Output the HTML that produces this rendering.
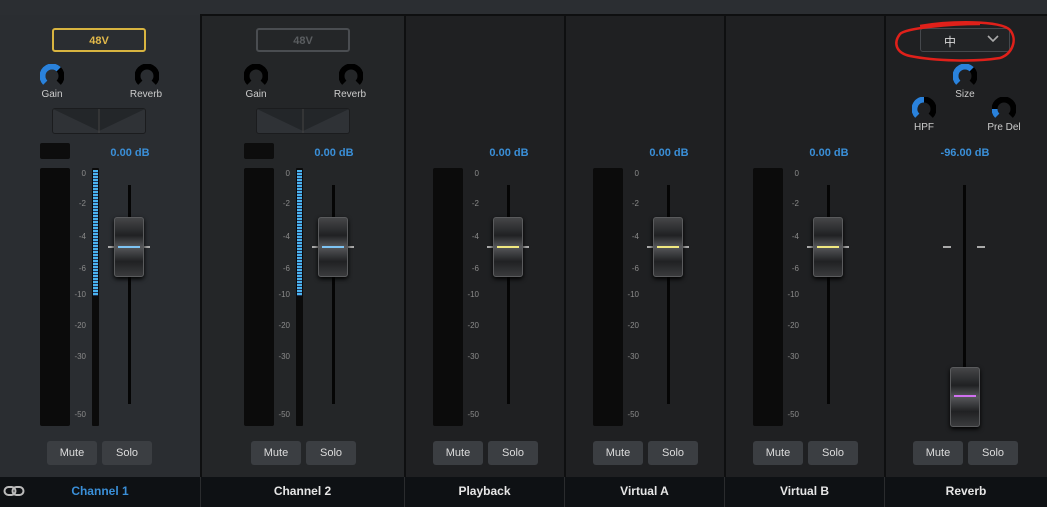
<!DOCTYPE html>
<html><head><meta charset="utf-8"><style>
*{margin:0;padding:0;box-sizing:border-box}
body{width:1047px;height:507px;background:#2b2e32;position:relative;overflow:hidden;font-family:"Liberation Sans","Noto Sans CJK SC",sans-serif;font-size:10px;color:#c8c8c8}
.a{position:absolute}
.ch{position:absolute;top:15px;height:462px;border-left:2px solid #0e0f10}
.foot{position:absolute;top:477px;height:30px;background:#0e1114;color:#e6e6e6;font-weight:bold;font-size:12px;text-align:center;line-height:29px;border-left:1px solid #2a2c2e}
.btn48{position:absolute;top:28px;width:94px;height:24px;border-radius:3px;text-align:center;line-height:22px;font-weight:bold;font-size:11px}
.meter{position:absolute;top:168px;width:30px;height:258px;background:#0b0b0b;border-radius:2px}
.sc{position:absolute;font-size:8px;color:#8a8a8a;text-align:right;width:14px}
.trk{position:absolute;top:185px;width:3px;height:219px;background:#050505}
.cap{position:absolute;width:30px;height:60px;border-radius:3px;border:1px solid #5a5b5d;background:linear-gradient(#454648,#202123 30%,#56575a 50%,#202123 75%,#3a3b3d 100%);box-shadow:0 2px 5px #000}
.cap i{position:absolute;left:3px;right:3px;height:2px}
.tk{position:absolute;height:2px;width:8px;background:#aaa}
.mb{position:absolute;top:441px;width:50px;height:24px;background:#3b3e42;border-radius:3px;text-align:center;line-height:24px;font-size:11px;color:#ddd}
.db{position:absolute;top:147px;width:90px;text-align:center;font-weight:bold;font-size:11px;color:#3a8fd8}
.kl{position:absolute;width:60px;text-align:center;font-size:10px;color:#ccc}
.sm{position:absolute;top:143px;width:30px;height:16px;background:#0d0d0d;border-radius:2px}
.pan{position:absolute;top:108px;width:94px;height:26px;border:1px solid #1b1c1e;border-radius:3px;background:#2f3236}
</style></head><body>
<div class="a" style="left:0;top:15px;width:200px;height:462px;background:#2a2d31"></div>
<div class="ch" style="left:200px;width:204px;background:#242628"></div>
<div class="ch" style="left:404px;width:160px;background:#1f2022"></div>
<div class="ch" style="left:564px;width:160px;background:#1f2022"></div>
<div class="ch" style="left:724px;width:160px;background:#1f2022"></div>
<div class="ch" style="left:884px;width:163px;background:#1f2022"></div>
<div class="a" style="left:200px;top:14px;width:847px;height:2px;background:#0e0f10"></div>

<div class="btn48" style="left:52px;border:2px solid #d8b440;color:#e2b94a">48V</div>
<div class="btn48" style="left:256px;border:2px solid #4a4d51;color:#5a5d60">48V</div>

<svg class="a" style="left:40px;top:64px" width="24" height="24"><path d="M5.28 18.72A9.5 9.5 0 1 1 18.72 18.72" fill="none" stroke="#000" stroke-width="6"/><path d="M5.28 18.72A9.5 9.5 0 0 1 18.72 5.28" fill="none" stroke="#2a82dc" stroke-width="6"/></svg>
<div class="kl" style="left:22px;top:89px">Gain</div>
<svg class="a" style="left:135px;top:64px" width="24" height="24"><path d="M5.28 18.72A9.5 9.5 0 1 1 18.72 18.72" fill="none" stroke="#000" stroke-width="6"/></svg>
<div class="kl" style="left:116px;top:89px">Reverb</div>
<svg class="a" style="left:244px;top:64px" width="24" height="24"><path d="M5.28 18.72A9.5 9.5 0 1 1 18.72 18.72" fill="none" stroke="#000" stroke-width="6"/></svg>
<div class="kl" style="left:226px;top:89px">Gain</div>
<svg class="a" style="left:339px;top:64px" width="24" height="24"><path d="M5.28 18.72A9.5 9.5 0 1 1 18.72 18.72" fill="none" stroke="#000" stroke-width="6"/></svg>
<div class="kl" style="left:320px;top:89px">Reverb</div>

<div class="a" style="left:920px;top:28px;width:90px;height:24px;border:1px solid #45484c;border-radius:3px;background:#222426"></div>
<div class="a" style="left:944px;top:33px;font-size:12px;color:#d8d8d8">中</div>
<svg class="a" style="left:987px;top:35px" width="12" height="8"><path d="M1 1L6 6L11 1" fill="none" stroke="#aaa" stroke-width="1.6"/></svg>
<svg class="a" style="left:890px;top:18px" width="130" height="48"><path d="M30 8C60 3 110 2 120 12C128 22 122 36 110 40C85 44 45 43 20 38C6 35 3 25 10 16C16 10 60 6 90 6" fill="none" stroke="#e0201a" stroke-width="2.5"/></svg>
<svg class="a" style="left:953px;top:64px" width="24" height="24"><path d="M5.28 18.72A9.5 9.5 0 1 1 18.72 18.72" fill="none" stroke="#000" stroke-width="6"/><path d="M5.28 18.72A9.5 9.5 0 0 1 18.72 5.28" fill="none" stroke="#2a82dc" stroke-width="6"/></svg>
<div class="kl" style="left:935px;top:89px">Size</div>
<svg class="a" style="left:912px;top:97px" width="24" height="24"><path d="M5.28 18.72A9.5 9.5 0 1 1 18.72 18.72" fill="none" stroke="#000" stroke-width="6"/><path d="M5.28 18.72A9.5 9.5 0 0 1 12 2.5" fill="none" stroke="#2a82dc" stroke-width="6"/></svg>
<div class="kl" style="left:894px;top:122px">HPF</div>
<svg class="a" style="left:992px;top:97px" width="24" height="24"><path d="M5.28 18.72A9.5 9.5 0 1 1 18.72 18.72" fill="none" stroke="#000" stroke-width="6"/><path d="M5.28 18.72A9.5 9.5 0 0 1 2.5 12" fill="none" stroke="#2a82dc" stroke-width="6"/></svg>
<div class="kl" style="left:974px;top:122px">Pre Del</div>

<div class="pan" style="left:52px"><svg width="92" height="24"><path d="M0 0L46 22L46 0ZM92 0L46 22L46 0Z" fill="#232629"/><line x1="46" y1="0" x2="46" y2="24" stroke="#444" /></svg></div>
<div class="pan" style="left:256px"><svg width="92" height="24"><path d="M0 0L46 22L46 0ZM92 0L46 22L46 0Z" fill="#232629"/><line x1="46" y1="0" x2="46" y2="24" stroke="#444" /></svg></div>
<div class="sm" style="left:40px"></div>
<div class="sm" style="left:244px"></div>

<div class="db" style="left:85px">0.00 dB</div>
<div class="db" style="left:289px">0.00 dB</div>
<div class="db" style="left:464px">0.00 dB</div>
<div class="db" style="left:624px">0.00 dB</div>
<div class="db" style="left:784px">0.00 dB</div>
<div class="db" style="left:920px">-96.00 dB</div>

<div class="meter" style="left:40px"></div>
<div class="meter" style="left:244px"></div>
<div class="meter" style="left:433px"></div>
<div class="meter" style="left:593px"></div>
<div class="meter" style="left:753px"></div>
<div class="a" style="left:92px;top:168px;width:7px;height:258px;background:#0b0b0b;border-radius:1px"></div>
<div class="a" style="left:93px;top:170px;width:5px;height:126px;background:repeating-linear-gradient(#4ab4f0 0 2px,#235 2px 3px)"></div>
<div class="a" style="left:296px;top:168px;width:7px;height:258px;background:#0b0b0b;border-radius:1px"></div>
<div class="a" style="left:297px;top:170px;width:5px;height:126px;background:repeating-linear-gradient(#4ab4f0 0 2px,#235 2px 3px)"></div>

<div class="a" style="left:72px;top:0">
<div class="sc" style="top:169px">0</div><div class="sc" style="top:199px">-2</div><div class="sc" style="top:232px">-4</div><div class="sc" style="top:264px">-6</div><div class="sc" style="top:290px">-10</div><div class="sc" style="top:321px">-20</div><div class="sc" style="top:352px">-30</div><div class="sc" style="top:410px">-50</div></div>
<div class="a" style="left:276px;top:0">
<div class="sc" style="top:169px">0</div><div class="sc" style="top:199px">-2</div><div class="sc" style="top:232px">-4</div><div class="sc" style="top:264px">-6</div><div class="sc" style="top:290px">-10</div><div class="sc" style="top:321px">-20</div><div class="sc" style="top:352px">-30</div><div class="sc" style="top:410px">-50</div></div>
<div class="a" style="left:465px;top:0">
<div class="sc" style="top:169px">0</div><div class="sc" style="top:199px">-2</div><div class="sc" style="top:232px">-4</div><div class="sc" style="top:264px">-6</div><div class="sc" style="top:290px">-10</div><div class="sc" style="top:321px">-20</div><div class="sc" style="top:352px">-30</div><div class="sc" style="top:410px">-50</div></div>
<div class="a" style="left:625px;top:0">
<div class="sc" style="top:169px">0</div><div class="sc" style="top:199px">-2</div><div class="sc" style="top:232px">-4</div><div class="sc" style="top:264px">-6</div><div class="sc" style="top:290px">-10</div><div class="sc" style="top:321px">-20</div><div class="sc" style="top:352px">-30</div><div class="sc" style="top:410px">-50</div></div>
<div class="a" style="left:785px;top:0">
<div class="sc" style="top:169px">0</div><div class="sc" style="top:199px">-2</div><div class="sc" style="top:232px">-4</div><div class="sc" style="top:264px">-6</div><div class="sc" style="top:290px">-10</div><div class="sc" style="top:321px">-20</div><div class="sc" style="top:352px">-30</div><div class="sc" style="top:410px">-50</div></div>

<div class="trk" style="left:128px"></div><div class="tk" style="left:108px;top:246px"></div><div class="tk" style="left:142px;top:246px"></div>
<div class="cap" style="left:114px;top:217px"><i style="top:28px;background:#7ec4f4"></i></div>
<div class="trk" style="left:332px"></div><div class="tk" style="left:312px;top:246px"></div><div class="tk" style="left:346px;top:246px"></div>
<div class="cap" style="left:318px;top:217px"><i style="top:28px;background:#7ec4f4"></i></div>
<div class="trk" style="left:507px"></div><div class="tk" style="left:487px;top:246px"></div><div class="tk" style="left:521px;top:246px"></div>
<div class="cap" style="left:493px;top:217px"><i style="top:28px;background:#f0e880"></i></div>
<div class="trk" style="left:667px"></div><div class="tk" style="left:647px;top:246px"></div><div class="tk" style="left:681px;top:246px"></div>
<div class="cap" style="left:653px;top:217px"><i style="top:28px;background:#f0e880"></i></div>
<div class="trk" style="left:827px"></div><div class="tk" style="left:807px;top:246px"></div><div class="tk" style="left:841px;top:246px"></div>
<div class="cap" style="left:813px;top:217px"><i style="top:28px;background:#f0e880"></i></div>
<div class="trk" style="left:963px;height:190px"></div><div class="tk" style="left:943px;top:246px"></div><div class="tk" style="left:977px;top:246px"></div>
<div class="cap" style="left:950px;top:367px"><i style="top:27px;background:#d070f0"></i></div>

<div class="mb" style="left:47px">Mute</div><div class="mb" style="left:102px">Solo</div>
<div class="mb" style="left:251px">Mute</div><div class="mb" style="left:306px">Solo</div>
<div class="mb" style="left:433px">Mute</div><div class="mb" style="left:488px">Solo</div>
<div class="mb" style="left:593px">Mute</div><div class="mb" style="left:648px">Solo</div>
<div class="mb" style="left:753px">Mute</div><div class="mb" style="left:808px">Solo</div>
<div class="mb" style="left:913px">Mute</div><div class="mb" style="left:968px">Solo</div>

<div class="foot" style="left:0;width:200px;color:#3a8fd8;border-left:none">Channel 1</div>
<svg class="a" style="left:3px;top:485px" width="22" height="12"><rect x="1.5" y="2" width="11" height="8" rx="4" fill="none" stroke="#bbb" stroke-width="2"/><rect x="9.5" y="2" width="11" height="8" rx="4" fill="none" stroke="#bbb" stroke-width="2"/></svg>
<div class="foot" style="left:200px;width:204px">Channel 2</div>
<div class="foot" style="left:404px;width:160px">Playback</div>
<div class="foot" style="left:564px;width:160px">Virtual A</div>
<div class="foot" style="left:724px;width:160px">Virtual B</div>
<div class="foot" style="left:884px;width:163px">Reverb</div>
</body></html>
